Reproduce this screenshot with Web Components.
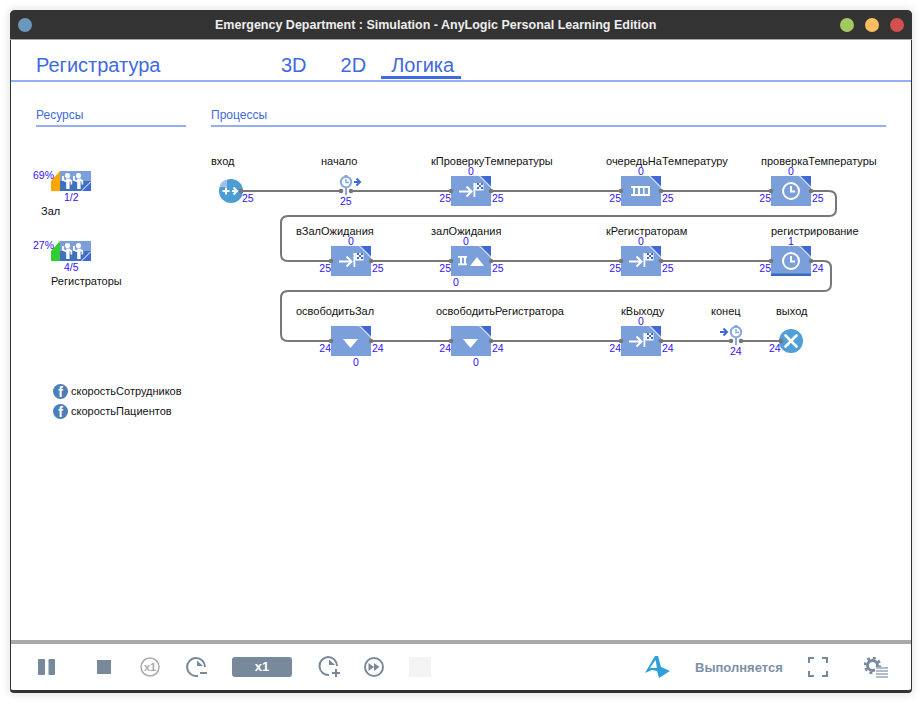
<!DOCTYPE html>
<html lang="ru">
<head>
<meta charset="utf-8">
<title>Emergency Department</title>
<style>
html, body { margin: 0; background: #fff; overflow: hidden; }
body { font-family: "Liberation Sans", Arial, sans-serif; }
</style>
</head>
<body>
<sim-window>
  <title-bar slot="title">Emergency Department : Simulation - AnyLogic Personal Learning Edition</title-bar>
  <tab-bar slot="tabs" heading="Регистратура"></tab-bar>
  <section-heads slot="heads"></section-heads>
  <flow-canvas slot="canvas">
    <resource-pool x="51" y="171" pct="69%" count="1/2" color="#ffa500" label="Зал" label-x="41"></resource-pool>
    <resource-pool x="51" y="241" pct="27%" count="4/5" color="#32cd32" label="Регистраторы" label-x="51"></resource-pool>
    <func-item x="53" y="384">скоростьСотрудников</func-item>
    <func-item x="53" y="404">скоростьПациентов</func-item>

    <flow-node kind="source" x="231" y="191" label="вход" label-x="211" label-y="161" count="25" count-x="242" count-y="198"></flow-node>
    <flow-node kind="start" x="346" y="191" label="начало" label-x="321" label-y="161" count="25" count-x="340" count-y="201"></flow-node>
    <flow-block x="451" y="176" icon="flag" label="кПроверкуТемпературы" label-x="431" in="25" out="25" q="0"></flow-block>
    <flow-block x="621" y="176" icon="queue" label="очередьНаТемпературу" label-x="606" in="25" out="25" q="0"></flow-block>
    <flow-block x="771" y="176" icon="clock" label="проверкаТемпературы" label-x="761" in="25" out="25" q="0"></flow-block>

    <flow-block x="331" y="246" icon="flag" label="вЗалОжидания" label-x="296" in="25" out="25" q="0"></flow-block>
    <flow-block x="451" y="246" icon="seize" label="залОжидания" label-x="431" in="25" out="25" q="0" q-top="0" q-x="5" q-below></flow-block>
    <flow-block x="621" y="246" icon="flag" label="кРегистраторам" label-x="606" in="25" out="25" q="0"></flow-block>
    <flow-block x="771" y="246" icon="clock" label="регистрирование" label-x="771" in="25" out="24" q="1" busy></flow-block>

    <flow-block x="331" y="326" icon="release" label="освободитьЗал" label-x="296" in="24" out="24" q="0" q-x="25" q-below></flow-block>
    <flow-block x="451" y="326" icon="release" label="освободитьРегистратора" label-x="436" in="24" out="24" q="0" q-x="25" q-below></flow-block>
    <flow-block x="621" y="326" icon="flag" label="кВыходу" label-x="621" in="24" out="24" q="0"></flow-block>
    <flow-node kind="end" x="736" y="341" label="конец" label-x="711" label-y="311" count="24" count-x="730" count-y="351"></flow-node>
    <flow-node kind="sink" x="791" y="341" label="выход" label-x="776" label-y="311" count="24" count-x="769" count-y="348"></flow-node>
  </flow-canvas>
  <tool-bar slot="tools"></tool-bar>
</sim-window>

<script>
class SimWindow extends HTMLElement {
    constructor() {
        super();
        this.attachShadow({ mode: "open" });
    }
    connectedCallback() {
        this.shadowRoot.innerHTML = `
        <style>
        :host {
            display: flex;
            flex-direction: column;
            box-sizing: border-box;
            width: 902px;
            height: 683px;
            margin: 10px;
            background: #fff;
            border-left: 1px solid #333;
            border-right: 1px solid #333;
            border-bottom: 3px solid #333;
            border-radius: 5px 5px 4px 4px;
            box-shadow: 0 0 7px 3px rgba(0,0,0,.08);
        }
        .main { position: relative; flex: 1; }
        </style>
        <slot name="title"></slot>
        <slot name="tabs"></slot>
        <div class="main">
            <slot name="heads"></slot>
            <slot name="canvas"></slot>
        </div>
        <slot name="tools"></slot>`;
    }
}

class TitleBar extends HTMLElement {
    constructor() {
        super();
        this.attachShadow({ mode: "open" });
    }
    connectedCallback() {
        this.shadowRoot.innerHTML = `
        <style>
        :host {
            display: flex;
            align-items: center;
            height: 30px;
            margin: 0 -1px;
            padding: 0 8px 0 9px;
            background: #333;
            border-radius: 5px 5px 0 0;
            border-bottom: 1px solid #aaa;
            box-sizing: border-box;
            color: #eee;
            font: bold 12.5px "Liberation Sans", Arial, sans-serif;
        }
        .dot { width: 14px; height: 14px; border-radius: 50%; }
        .menu { background: #6a98bd; margin-right: 183px; margin-left: -1px; }
        .name { flex: 1; white-space: nowrap; }
        .dots { display: flex; gap: 11px; }
        </style>
        <span class="dot menu"></span>
        <span class="name"><slot></slot></span>
        <span class="dots">
            <span class="dot" style="background:#a2c95e"></span>
            <span class="dot" style="background:#febd5f"></span>
            <span class="dot" style="background:#d3504f"></span>
        </span>`;
    }
}

class TabBar extends HTMLElement {
    constructor() {
        super();
        this.attachShadow({ mode: "open" });
    }
    connectedCallback() {
        this.shadowRoot.innerHTML = `
        <style>
        :host {
            display: flex;
            height: 42px;
            box-sizing: border-box;
            border-bottom: 2px solid #96aff0;
            padding-left: 25px;
            font: 20px "Liberation Sans", Arial, sans-serif;
            color: #4169e1;
        }
        h1 { font: inherit; margin: 0; width: 225px; line-height: 51px; height: 40px; }
        nav { display: flex; }
        a { display: block; line-height: 51px; height: 40px; }
        .first { padding: 0 20px; }
        .second { margin-left: 14px; padding-right: 15px; }
        .on { border-bottom: 3px solid #4169e1; padding: 0 7px 0 10px; height: 39px; box-sizing: border-box; }
        </style>
        <h1>${this.getAttribute("heading")}</h1>
        <nav>
            <a class="first">3D</a>
            <a class="second">2D</a>
            <a class="on">Логика</a>
        </nav>`;
    }
}

class SectionHeads extends HTMLElement {
    constructor() {
        super();
        this.attachShadow({ mode: "open" });
    }
    connectedCallback() {
        this.shadowRoot.innerHTML = `
        <style>
        :host {
            display: grid;
            grid-template-columns: 150px 675px;
            gap: 25px;
            padding: 23px 25px 0;
            font: 12px "Liberation Sans", Arial, sans-serif;
            color: #4169e1;
        }
        div { height: 20px; line-height: 20px; border-bottom: 2px solid #96aff0; }
        </style>
        <div>Ресурсы</div>
        <div>Процессы</div>`;
    }
}

// all wires are in page coordinates, that's why the canvas sits at -11,-82
const WIRES = [
    "M241 191H341", "M351 191H451", "M491 191H621", "M661 191H771",
    "M811 191H829q7 0 7 7V209q0 7-7 7H288q-7 0-7 7V254q0 7 7 7H331",
    "M371 261H451", "M491 261H621", "M661 261H771",
    "M811 261H824q7 0 7 7V284q0 7-7 7H288q-7 0-7 7V334q0 7 7 7H331",
    "M371 341H451", "M491 341H621", "M661 341H731", "M741 341H781"
];

class FlowCanvas extends HTMLElement {
    constructor() {
        super();
        this.attachShadow({ mode: "open" });
    }
    connectedCallback() {
        this.shadowRoot.innerHTML = `
        <style>
        :host {
            display: block;
            position: absolute;
            left: -11px;
            top: -82px;
            width: 922px;
            height: 560px;
            font: 11px "Liberation Sans", Arial, sans-serif;
            color: #111;
        }
        svg { position: absolute; left: 0; top: 0; }
        </style>
        <svg width="922" height="560" fill="none" stroke="#777" stroke-width="2">
            ${WIRES.map(d => `<path d="${d}"/>`).join("")}
        </svg>
        <slot></slot>`;
    }
}

const BLOCK_ICONS = {
    flag: `
        <path d="M8 15.500H20M15.500 10.500l5 5-5 5" fill="none" stroke="#fff" stroke-width="2"/>
        <path d="M22.500 7h1.800v14h-1.800z" fill="#fff"/>
        <path d="M24.300 7H32.500v7.500h-8.200z" fill="#fff"/>
        <path d="M26 7h2v2h-2zM30 7h2v2h-2zM28 9h2v2h-2zM26 11h2v2h-2zM30 11h2v2h-2z" fill="#3f69d9"/>`,
    queue: `
        <path d="M10 10h19v2h-19zM10 18h19v2h-19z" fill="#fff"/>
        <path d="M12 11h2v8h-2zM17 11h2v8h-2zM22 11h1.500v8h-1.500zM27 11h2v8h-2z" fill="#fff"/>`,
    clock: `
        <circle cx="20" cy="15" r="8" fill="none" stroke="#fff" stroke-width="2"/>
        <path d="M20 10v5.500h4" fill="none" stroke="#fff" stroke-width="2"/>`,
    seize: `
        <path d="M7 10h9v1.800H7zM7 17.500h9v1.800H7z" fill="#fff"/>
        <path d="M10 11v7M14 11v7" stroke="#fff" stroke-width="2" fill="none"/>
        <path d="M19 20l7-9 7 9z" fill="#fff"/>`,
    release: `<path d="M12 13h15l-7.500 9z" fill="#fff"/>`
};

class FlowBlock extends HTMLElement {
    constructor() {
        super();
        this.attachShadow({ mode: "open" });
    }
    connectedCallback() {
        const attr = n => this.getAttribute(n);
        const x = +attr("x"), y = +attr("y");
        const below = this.hasAttribute("q-below");
        const qLeft = below ? +attr("q-x") - 5 : 15;
        const qTop = below ? 30 : -11;
        // залОжидания shows a second counter over the block
        const top = this.hasAttribute("q-top") ? `<span class="num q2">${attr("q-top")}</span>` : "";
        this.shadowRoot.innerHTML = `
        <style>
        :host { position: absolute; display: block; left: ${x}px; top: ${y}px; width: 40px; height: 30px; }
        svg { display: block; overflow: visible; }
        span { position: absolute; white-space: nowrap; line-height: 12px; }
        .label { left: ${attr("label-x") - x}px; top: -21px; }
        .num { font-size: 10.5px; color: #3311ff; }
        .in { right: 40px; top: 16px; }
        .out { left: 41px; top: 16px; }
        .q { left: ${qLeft}px; top: ${qTop}px; width: 10px; text-align: center; }
        .q2 { left: 10px; top: -11px; width: 10px; text-align: center; }
        </style>
        <svg width="40" height="30">
            <rect width="40" height="30" fill="#7b9fdb"/>
            ${this.hasAttribute("busy") ? `<rect y="27.500" width="40" height="2.500" fill="#3a6abf"/>` : ""}
            ${BLOCK_ICONS[attr("icon")]}
            <path d="M30 0H40V10z" fill="#3f69d9"/>
            <path d="M28 -.5L40.500 12" stroke="#fff" stroke-width="1" fill="none"/>
            <circle cx="0" cy="15" r="2.300" fill="#777"/>
            <circle cx="40" cy="15" r="2.300" fill="#777"/>
        </svg>
        <span class="label">${attr("label")}</span>
        <span class="num in">${attr("in")}</span>
        <span class="num out">${attr("out")}</span>
        <span class="num q">${attr("q")}</span>
        ${top}`;
    }
}

const CLOCK_STEM = `
        <circle cx="-5" cy="0" r="2.300" fill="#777"/>
        <circle cx="5" cy="0" r="2.300" fill="#777"/>
        <path d="M0 -4V4" stroke="#88a8e2" stroke-width="2"/>
        <rect x="-1.500" y="-16" width="3" height="3" fill="#88a8e2"/>
        <circle cx="0" cy="-9" r="5.200" fill="none" stroke="#88a8e2" stroke-width="2"/>
        <path d="M0 -12v3.500h3" fill="none" stroke="#88a8e2" stroke-width="1.400"/>`;

const NODE_ICONS = {
    source: `
        <circle cx="0" cy="0" r="12" fill="#4b9ed4"/>
        <path d="M-4 -4V-11.300A8 8 0 0 0 -11.300 -4z" fill="#a4bdec"/>
        <path d="M-8.500 0h7M-5 -3.500v7M1 0h4.500M2.500 -3.500l3.500 3.500-3.500 3.500" fill="none" stroke="#fff" stroke-width="2"/>
        <circle cx="10" cy="0" r="2.300" fill="#777"/>`,
    sink: `
        <circle cx="0" cy="0" r="12" fill="#4f9fd8"/>
        <path d="M-5.500 -5.500L5.500 5.500M5.500 -5.500L-5.500 5.500" stroke="#fff" stroke-width="2.600" stroke-linecap="round"/>
        <circle cx="-10" cy="0" r="2.300" fill="#777"/>`,
    start: CLOCK_STEM + `
        <path d="M8 -9h6M10.500 -12.500l3.500 3.500-3.500 3.500" fill="none" stroke="#3f69d9" stroke-width="2"/>`,
    end: CLOCK_STEM + `
        <path d="M-16 -9h7M-12.500 -12.500l3.500 3.500-3.500 3.500" fill="none" stroke="#3f69d9" stroke-width="2"/>`
};

class FlowNode extends HTMLElement {
    constructor() {
        super();
        this.attachShadow({ mode: "open" });
    }
    connectedCallback() {
        const attr = n => this.getAttribute(n);
        const x = +attr("x"), y = +attr("y");
        this.shadowRoot.innerHTML = `
        <style>
        :host { position: absolute; display: block; left: ${x}px; top: ${y}px; width: 0; height: 0; }
        svg { position: absolute; overflow: visible; left: 0; top: 0; }
        span { position: absolute; white-space: nowrap; line-height: 12px; }
        .label { left: ${attr("label-x") - x}px; top: ${attr("label-y") - y - 6}px; }
        .num { font-size: 10.5px; color: #3311ff; left: ${attr("count-x") - x}px; top: ${attr("count-y") - y - 6}px; }
        </style>
        <svg width="1" height="1">${NODE_ICONS[attr("kind")]}</svg>
        <span class="label">${attr("label")}</span>
        <span class="num">${attr("count")}</span>`;
    }
}

function personIcon(cx) {
    return `<g transform="translate(${cx} 175.500)" fill="#fff">
        <circle cx="0" cy="0" r="2.600"/>
        <path d="M-5.500 .5h1.800v3.300l2.400 1.400V3h3.200l2.800 2.300V9h-1.600V6.300l-1-.6V13.500h-3.400V6.800l-4.200-1.900z"/>
    </g>`;
}

class ResourcePool extends HTMLElement {
    constructor() {
        super();
        this.attachShadow({ mode: "open" });
    }
    connectedCallback() {
        const attr = n => this.getAttribute(n);
        const x = +attr("x"), y = +attr("y");
        this.shadowRoot.innerHTML = `
        <style>
        :host { position: absolute; display: block; left: ${x}px; top: ${y}px; width: 40px; height: 20px; }
        svg { display: block; overflow: visible; }
        span { position: absolute; white-space: nowrap; line-height: 12px; }
        .num { font-size: 10.5px; color: #3311ff; }
        .pct { left: -18px; top: -2px; }
        .count { left: 13px; top: 20px; }
        .label { left: ${attr("label-x") - x}px; top: 34px; }
        </style>
        <svg width="40" height="20" viewBox="51 171 40 20">
            <path d="M51 191V181L60 171V191z" fill="${attr("color")}"/>
            <rect x="60" y="171" width="31" height="10" fill="#7b9fdb"/>
            <rect x="60" y="181" width="31" height="10" fill="#3e72bd"/>
            <path d="M81 191L91 181V191z" fill="#3f69d9"/>
            <path d="M81 191.500L91 181.500" stroke="#fff" stroke-width="1"/>
            ${personIcon(67.5)}
            ${personIcon(78.5)}
        </svg>
        <span class="num pct">${attr("pct")}</span>
        <span class="num count">${attr("count")}</span>
        <span class="label">${attr("label")}</span>`;
    }
}

class FuncItem extends HTMLElement {
    constructor() {
        super();
        this.attachShadow({ mode: "open" });
    }
    connectedCallback() {
        this.shadowRoot.innerHTML = `
        <style>
        :host {
            position: absolute;
            left: ${this.getAttribute("x")}px;
            top: ${this.getAttribute("y")}px;
            display: flex;
            align-items: center;
            gap: 3px;
            height: 14px;
            white-space: nowrap;
        }
        b {
            width: 15px;
            height: 15px;
            border-radius: 50%;
            background: #4c7fb5;
            color: #fff;
            text-align: center;
            font: bold 14px/16px "Liberation Sans", Arial, sans-serif;
        }
        </style>
        <b>f</b>
        <slot></slot>`;
    }
}

class ToolBar extends HTMLElement {
    constructor() {
        super();
        this.attachShadow({ mode: "open" });
    }
    connectedCallback() {
        const stroke = `fill="none" stroke="#78899c" stroke-width="2"`;
        this.shadowRoot.innerHTML = `
        <style>
        :host {
            display: flex;
            align-items: center;
            height: 50px;
            box-sizing: border-box;
            border-top: 4px solid #a9a9a9;
            font: 13px "Liberation Sans", Arial, sans-serif;
            color: #78899c;
        }
        svg { display: block; flex: none; }
        .speed {
            width: 60px;
            height: 20px;
            margin-left: 25px;
            border-radius: 3px;
            background: #78899c;
            color: #fff;
            font-weight: bold;
            text-align: center;
            line-height: 20px;
        }
        .blank { width: 22px; height: 20px; margin-left: 25px; background: #f4f4f4; }
        .status { font-weight: bold; color: #7e8fa8; margin-left: 24px; width: 113px; white-space: nowrap; }
        </style>
        <svg style="margin-left:27px" width="18" height="16" viewBox="0 0 18 16"><rect width="7" height="16" rx="1" fill="#78899c"/><rect x="10.500" width="6.500" height="16" rx="1" fill="#78899c"/></svg>
        <svg style="margin-left:41px" width="14" height="14"><rect width="14" height="14" fill="#78899c"/></svg>
        <svg style="margin-left:29px" width="20" height="20" viewBox="0 0 20 20"><circle cx="10" cy="10" r="9" fill="none" stroke="#aaa" stroke-width="1.500"/><text x="10" y="14" text-anchor="middle" font-family="Liberation Sans" font-size="11" font-weight="bold" fill="#aaa">x1</text></svg>
        <svg style="margin-left:26px" width="21" height="20" viewBox="0 0 21 20"><path d="M10 1A9 9 0 1 0 12 18.800" ${stroke}/><path d="M10 1A9 9 0 0 1 19 10" ${stroke}/><path d="M11 3.500L17 9H11z" fill="#78899c"/><path d="M14 16h7" stroke="#78899c" stroke-width="2"/></svg>
        <span class="speed">x1</span>
        <svg style="margin-left:26px" width="22" height="22" viewBox="0 0 22 22"><path d="M10 1A9 9 0 1 0 11 19" ${stroke}/><path d="M10 1A9 9 0 0 1 19 10" ${stroke}/><path d="M11 3.500L17 9H11z" fill="#78899c"/><path d="M14 17h8M18 13v8" stroke="#78899c" stroke-width="2"/></svg>
        <svg style="margin-left:24px" width="20" height="20" viewBox="0 0 20 20"><circle cx="10" cy="10" r="9" ${stroke}/><path d="M4.500 6l5.500 4-5.500 4zM10 6l5.500 4-5.500 4z" fill="#78899c"/></svg>
        <span class="blank"></span>
        <svg style="margin-left:214px" width="26" height="22" viewBox="0 0 26 22"><path d="M10 0H13L16 11 25 15 14 22 12 15 7 14 0 17z" fill="#2f9fdb"/><path d="M5 12L10.500 4 12 12z" fill="#fff"/></svg>
        <span class="status">Выполняется</span>
        <svg width="20" height="20" viewBox="0 0 20 20"><path d="M1 6V1H6M14 1H19V6M19 14V19H14M6 19H1V14" fill="none" stroke="#78899c" stroke-width="2"/></svg>
        <svg style="margin-left:36px" width="24" height="21" viewBox="0 0 24 21"><circle cx="8.500" cy="8.500" r="5" fill="none" stroke="#78899c" stroke-width="3"/><circle cx="8.500" cy="8.500" r="7.500" fill="none" stroke="#78899c" stroke-width="2.500" stroke-dasharray="3 2.900"/><path d="M11 10h13v11H11z" fill="#fff"/><path d="M12 11h12M12 14h12M12 17h12M12 20h12" stroke="#b2bcc8" stroke-width="2"/></svg>`;
    }
}

customElements.define("sim-window", SimWindow);
customElements.define("title-bar", TitleBar);
customElements.define("tab-bar", TabBar);
customElements.define("section-heads", SectionHeads);
customElements.define("flow-canvas", FlowCanvas);
customElements.define("flow-block", FlowBlock);
customElements.define("flow-node", FlowNode);
customElements.define("resource-pool", ResourcePool);
customElements.define("func-item", FuncItem);
customElements.define("tool-bar", ToolBar);
</script>
</body>
</html>
